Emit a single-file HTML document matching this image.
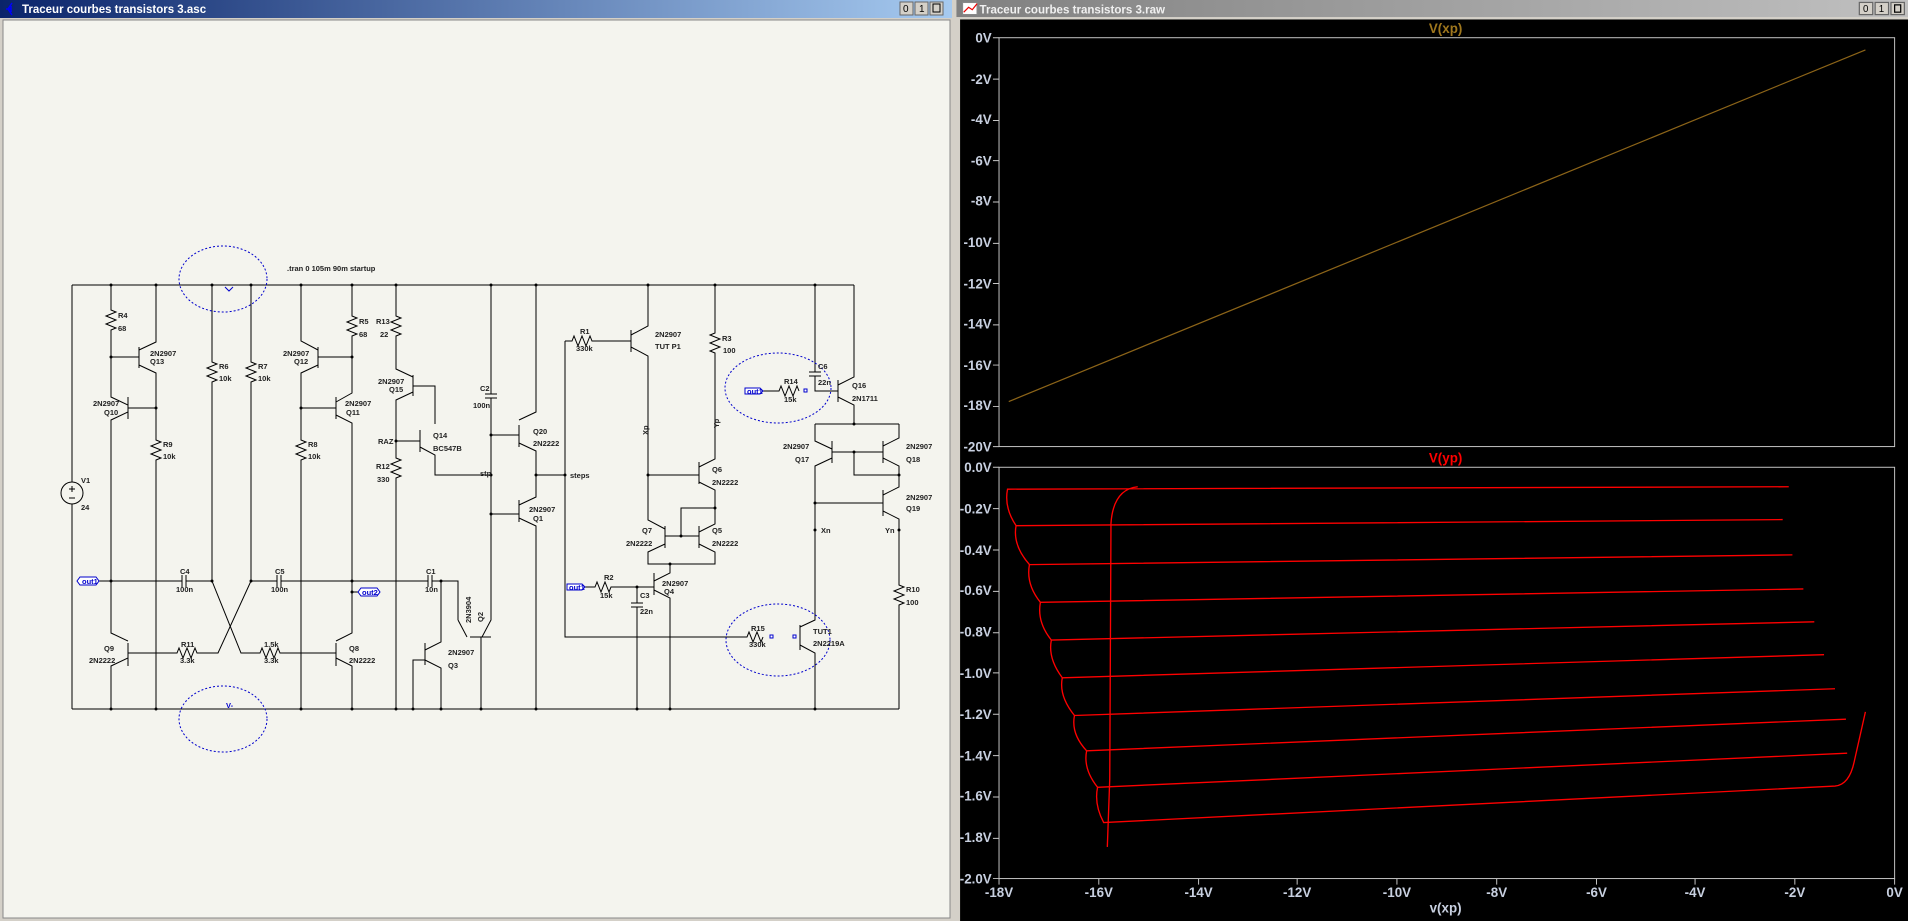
<!DOCTYPE html>
<html><head><meta charset="utf-8"><style>
html,body{margin:0;padding:0;background:#d4d0c8;width:1908px;height:921px;overflow:hidden}
svg{display:block}
.t{font-family:"Liberation Sans",sans-serif;font-size:7.5px;font-weight:bold;fill:#222}
.ax{font-family:"Liberation Sans",sans-serif;font-size:11px;font-weight:bold;fill:#c8d0e0}
</style></head><body>
<svg width="1908" height="921" viewBox="0 0 1908 921" xmlns="http://www.w3.org/2000/svg">
<defs><linearGradient id="g1" x1="0" x2="1"><stop offset="0" stop-color="#0a246a"/><stop offset="1" stop-color="#a6caf0"/></linearGradient>
<linearGradient id="g2" x1="0" x2="1"><stop offset="0" stop-color="#808080"/><stop offset="1" stop-color="#c0c0c0"/></linearGradient></defs>
<rect width="1908" height="921" fill="#d4d0c8"/>
<rect x="0" y="0" width="952" height="18" fill="url(#g1)"/>
<text x="22" y="13" font-family="Liberation Sans" font-size="11.5" font-weight="bold" fill="#fff">Traceur courbes transistors 3.asc</text>
<path d="M12 3 L8 9 L12 15 M6 9 H11 M11 6 V12" stroke="#00f" stroke-width="1.5" fill="none"/>
<g font-family="Liberation Sans" font-size="10" fill="#000">
<rect x="900" y="2" width="13" height="13" fill="#d4d0c8" stroke="#666"/><text x="903" y="12">0</text>
<rect x="915" y="2" width="13" height="13" fill="#d4d0c8" stroke="#666"/><text x="919" y="12">1</text>
<rect x="930" y="2" width="13" height="13" fill="#d4d0c8" stroke="#666"/><rect x="933" y="4" width="7" height="8" fill="none" stroke="#000"/>
</g>
<rect x="3" y="20" width="947" height="898" fill="#f4f4ee" stroke="#888"/>

<g stroke="#000" stroke-width="1" fill="none">
<path d="M72 285 H854 M72 709 H899"/>
<path d="M72 285 V482 M72 504 V709"/>
<circle cx="72" cy="493" r="11"/>
<path d="M69 489 h6 M72 486 v6 M69 498 h6"/>
<path d="M111 285 V310 l5 2 -10 4 10 4 -10 4 10 4 -5 2 V397 l17 8 M128 397 V419 M128 412 l-17 8 V633 l17 8 M128 643 V666 M128 658 l-17 8 V709"/>
<path d="M111 357 H139 M139 347 V368 M139 350 l17 -8 V285 M139 365 l17 8 V440 l5 2 -10 4 10 4 -10 4 10 4 -5 2 V709 M128 408 H156"/>
<path d="M212 285 V362 l5 2 -10 4 10 4 -10 4 10 4 -5 2 V581 L241 653 H260 l2 -5 4 10 4 -10 4 10 4 -10 2 5 H336"/>
<path d="M251 285 V362 l5 2 -10 4 10 4 -10 4 10 4 -5 2 V581 L218 653 H197 l-2 -5 -4 10 -4 -10 -4 10 -4 -10 -2 5 H128"/>
<path d="M301 285 V341 l17 9 M318 347 V368 M318 365 l-17 8 V440 l5 2 -10 4 10 4 -10 4 10 4 -5 2 V709 M301 408 H336 M318 357 H352"/>
<path d="M352 285 V316 l5 2 -10 4 10 4 -10 4 10 4 -5 2 V393 l-16 9 M336 397 V419 M336 415 l16 8 V633 l-16 8 M336 643 V666 M336 658 l16 8 V709"/>
<path d="M99 581 H182 M186 581 H212 M251 581 H277 M281 581 H428 M432 581 H458 V620"/>
<path d="M182 575 V587 M186 575 V587 M277 575 V587 M281 575 V587 M428 575 V587 M432 575 V587"/>
<path d="M352 592 H360"/>
<path d="M396 285 V316 l5 2 -10 4 10 4 -10 4 10 4 -5 2 V369 l17 8 M413 375 V396 M413 386 H435 V424 M413 392 l-17 8 V458 l5 2 -10 4 10 4 -10 4 10 4 -5 2 V709 M396 441 H420 M420 430 V452 M420 447 l15 8 V475 H491"/>
<path d="M491 285 V394 M491 398 V620 L482 637 M485 394 h12 M485 398 h12 M491 435 H519 M491 514 H519"/>
<path d="M519 425 V447 M519 420 l17 -8 V285 M519 443 l17 8 V475 H565 M519 500 V522 M519 505 l17 -8 V475 M519 518 l17 8 V709"/>
<path d="M458 620 l9 17 M470 637 H491 M481 637 V709 M425 643 V665 M425 650 l16 -8 V581 M425 660 l16 8 V709 M413 709 V660 H425"/>
<path d="M565 341 V637 H747 l2 -5 4 10 4 -10 4 10 2 -5"/>
<path d="M565 341 H572 l2 -5 4 10 4 -10 4 10 4 -10 2 5 H631 M631 330 V352 M631 335 l17 -9 V285 M631 347 l17 9 V520 l17 9 M665 526 V548 M665 544 l-17 8 V564 H715 V552 l-16 -8 M699 526 V548 M665 536 H699 M681 536 V508 H715 V490 l-16 -8 M699 462 V484 M699 467 l16 -8 V353 l-5 -2 10 -4 -10 -4 10 -4 -10 -4 5 -2 V285 M648 475 H699 M699 532 l16 -8 V508"/>
<path d="M670 564 V573 l-16 8 M654 573 V595 M654 590 l16 8 V709 M585 587 H595 l2 -5 4 10 4 -10 4 10 2 -5 H654 M637 587 V603 M631 603 h12 M631 607 h12 M637 607 V709"/>
<path d="M815 285 V372 M809 372 h12 M809 376 h12 M815 376 V391 H838 M838 380 V402 M838 385 l16 -8 V285 M838 397 l16 8 V424 M815 424 H899 M815 424 V441 l17 8 M832 441 V463 M832 458 l-17 8 V620 l-15 7 M800 625 V650 M800 645 l15 8 V709 M832 452 H883 M854 452 V475 H899 M883 441 V463 M883 446 l16 -8 V424 M883 458 l16 8 V475 M815 503 H883 M883 490 V516 M883 495 l16 -8 V475 M883 511 l16 8 V585 l5 2 -10 4 10 4 -10 4 10 4 -5 2 V709"/>
<path d="M763 391 H779 l2 -5 4 10 4 -10 4 10 4 -10 2 5"/>
</g>
<g stroke="#00c" stroke-width="1" stroke-dasharray="2,2" fill="none">
<ellipse cx="223" cy="279" rx="44" ry="33"/><ellipse cx="223" cy="719" rx="44" ry="33"/>
<ellipse cx="778" cy="388" rx="53" ry="35"/><ellipse cx="778" cy="640" rx="52" ry="36"/>
</g>
<path d="M225 287 l4 4 4 -4" stroke="#00c" fill="none"/>
<g fill="#000">
<circle cx="111" cy="285" r="1.5"/><circle cx="156" cy="285" r="1.5"/><circle cx="212" cy="285" r="1.5"/><circle cx="251" cy="285" r="1.5"/><circle cx="301" cy="285" r="1.5"/><circle cx="352" cy="285" r="1.5"/><circle cx="396" cy="285" r="1.5"/><circle cx="491" cy="285" r="1.5"/><circle cx="536" cy="285" r="1.5"/><circle cx="648" cy="285" r="1.5"/><circle cx="715" cy="285" r="1.5"/><circle cx="815" cy="285" r="1.5"/>
<circle cx="111" cy="709" r="1.5"/><circle cx="156" cy="709" r="1.5"/><circle cx="301" cy="709" r="1.5"/><circle cx="352" cy="709" r="1.5"/><circle cx="396" cy="709" r="1.5"/><circle cx="413" cy="709" r="1.5"/><circle cx="441" cy="709" r="1.5"/><circle cx="481" cy="709" r="1.5"/><circle cx="536" cy="709" r="1.5"/><circle cx="637" cy="709" r="1.5"/><circle cx="670" cy="709" r="1.5"/><circle cx="815" cy="709" r="1.5"/>
<circle cx="111" cy="581" r="1.5"/><circle cx="212" cy="581" r="1.5"/><circle cx="251" cy="581" r="1.5"/><circle cx="352" cy="581" r="1.5"/><circle cx="441" cy="581" r="1.5"/><circle cx="352" cy="592" r="1.5"/>
<circle cx="111" cy="357" r="1.5"/><circle cx="352" cy="357" r="1.5"/><circle cx="156" cy="408" r="1.5"/><circle cx="301" cy="408" r="1.5"/><circle cx="396" cy="441" r="1.5"/><circle cx="491" cy="435" r="1.5"/><circle cx="491" cy="475" r="1.5"/><circle cx="491" cy="514" r="1.5"/><circle cx="536" cy="475" r="1.5"/><circle cx="565" cy="475" r="1.5"/><circle cx="648" cy="475" r="1.5"/><circle cx="715" cy="508" r="1.5"/><circle cx="681" cy="536" r="1.5"/><circle cx="670" cy="564" r="1.5"/><circle cx="637" cy="587" r="1.5"/><circle cx="854" cy="424" r="1.5"/><circle cx="854" cy="452" r="1.5"/><circle cx="899" cy="475" r="1.5"/><circle cx="815" cy="503" r="1.5"/><circle cx="815" cy="530" r="1.5"/><circle cx="899" cy="530" r="1.5"/>
</g>
<g fill="#fff" stroke="#00c"><rect x="804" y="389" width="3" height="3"/><rect x="770" y="635" width="3" height="3"/><rect x="793" y="635" width="3" height="3"/></g>
<g font-family="Liberation Sans" font-size="7.5" font-weight="bold">
<path d="M77 581 l3 -4 h16 l3 4 -3 4 h-16 z" fill="#fff" stroke="#00c"/><text x="82" y="584" fill="#00c">out1</text>
<path d="M358 592 l3 -4 h16 l3 4 -3 4 h-16 z" fill="#fff" stroke="#00c"/><text x="362" y="595" fill="#00c">out2</text>
<path d="M567 584 h15 l3 3 -3 3 h-15 z" fill="#fff" stroke="#00c"/><text x="569" y="590" fill="#00c">out1</text>
<path d="M745 388 h15 l3 3 -3 3 h-15 z" fill="#fff" stroke="#00c"/><text x="747" y="394" fill="#00c">out1</text>
<text x="226" y="708" fill="#00c">V-</text>
</g>
<g class="t">
<text x="287" y="271">.tran 0 105m 90m startup</text>
<text x="81" y="483">V1</text><text x="81" y="510">24</text>
<text x="118" y="318">R4</text><text x="118" y="331">68</text>
<text x="150" y="356">2N2907</text><text x="150" y="364">Q13</text>
<text x="93" y="406">2N2907</text><text x="104" y="415">Q10</text>
<text x="163" y="447">R9</text><text x="163" y="459">10k</text>
<text x="219" y="369">R6</text><text x="219" y="381">10k</text>
<text x="258" y="369">R7</text><text x="258" y="381">10k</text>
<text x="283" y="356">2N2907</text><text x="294" y="364">Q12</text>
<text x="345" y="406">2N2907</text><text x="346" y="415">Q11</text>
<text x="308" y="447">R8</text><text x="308" y="459">10k</text>
<text x="359" y="324">R5</text><text x="359" y="337">68</text>
<text x="376" y="324">R13</text><text x="380" y="337">22</text>
<text x="378" y="384">2N2907</text><text x="389" y="392">Q15</text>
<text x="378" y="444">RAZ</text><text x="433" y="438">Q14</text><text x="433" y="451">BC547B</text>
<text x="376" y="469">R12</text><text x="377" y="482">330</text>
<text x="480" y="476">stp</text>
<text x="480" y="391">C2</text><text x="473" y="408">100n</text>
<text x="180" y="574">C4</text><text x="176" y="592">100n</text>
<text x="275" y="574">C5</text><text x="271" y="592">100n</text>
<text x="426" y="574">C1</text><text x="425" y="592">10n</text>
<text x="104" y="651">Q9</text><text x="89" y="663">2N2222</text>
<text x="181" y="647">R11</text><text x="180" y="663">3.3k</text>
<text x="264" y="647">1.5k</text><text x="264" y="663">3.3k</text>
<text x="349" y="651">Q8</text><text x="349" y="663">2N2222</text>
<text x="448" y="655">2N2907</text><text x="448" y="668">Q3</text>
<text transform="translate(471,623) rotate(-90)">2N3904</text><text transform="translate(483,622) rotate(-90)">Q2</text>
<text x="533" y="434">Q20</text><text x="533" y="446">2N2222</text>
<text x="529" y="512">2N2907</text><text x="533" y="521">Q1</text>
<text x="570" y="478">steps</text>
<text x="580" y="334">R1</text><text x="576" y="351">330k</text>
<text x="655" y="337">2N2907</text><text x="655" y="349">TUT  P1</text>
<text transform="translate(648,435) rotate(-90)">Xp</text><text transform="translate(719,428) rotate(-90)">Yp</text>
<text x="722" y="341">R3</text><text x="723" y="353">100</text>
<text x="712" y="472">Q6</text><text x="712" y="485">2N2222</text>
<text x="642" y="533">Q7</text><text x="626" y="546">2N2222</text>
<text x="712" y="533">Q5</text><text x="712" y="546">2N2222</text>
<text x="604" y="580">R2</text><text x="600" y="598">15k</text>
<text x="662" y="586">2N2907</text><text x="664" y="594">Q4</text>
<text x="640" y="598">C3</text><text x="640" y="614">22n</text>
<text x="784" y="384">R14</text><text x="784" y="402">15k</text>
<text x="818" y="369">C6</text><text x="818" y="385">22n</text>
<text x="852" y="388">Q16</text><text x="852" y="401">2N1711</text>
<text x="783" y="449">2N2907</text><text x="795" y="462">Q17</text>
<text x="906" y="449">2N2907</text><text x="906" y="462">Q18</text>
<text x="906" y="500">2N2907</text><text x="906" y="511">Q19</text>
<text x="821" y="533">Xn</text><text x="885" y="533">Yn</text>
<text x="906" y="592">R10</text><text x="906" y="605">100</text>
<text x="751" y="631">R15</text><text x="749" y="647">330k</text>
<text x="813" y="634">TUT1</text><text x="813" y="646">2N2219A</text>
</g>

<g transform="scale(1.21684)">
<rect x="786" y="0" width="782" height="14" fill="url(#g2)"/>
<rect x="791" y="2" width="12" height="10" fill="#fff" stroke="#888"/><path d="M792 10 L796 6 L799 8 L803 3" stroke="#e00" fill="none"/>
<text x="805" y="11" font-family="Liberation Sans" font-size="9.5" font-weight="bold" fill="#f0f0f0">Traceur courbes transistors 3.raw</text>
<g font-family="Liberation Sans" font-size="8" fill="#000">
<rect x="1528" y="2" width="11" height="10" fill="#d4d0c8" stroke="#666"/><text x="1531" y="10">0</text>
<rect x="1541" y="2" width="11" height="10" fill="#d4d0c8" stroke="#666"/><text x="1544" y="10">1</text>
<rect x="1554" y="2" width="11" height="10" fill="#d4d0c8" stroke="#666"/><rect x="1557" y="4" width="5" height="6" fill="none" stroke="#000"/>
</g>
<rect x="789" y="16" width="779" height="741" fill="#000"/>
<g stroke="#c8c8c8" stroke-width="0.8" fill="none">
<rect x="821" y="31" width="736" height="336"/>
<rect x="821" y="384" width="736" height="338"/>
</g>
<text x="1188" y="27" class="ax" style="fill:#a0781e" text-anchor="middle">V(xp)</text>
<text x="1188" y="380" class="ax" style="fill:#f00" text-anchor="middle">V(yp)</text>
<text x="1188" y="750" class="ax" text-anchor="middle">v(xp)</text>
<g class="ax" text-anchor="end">
<text x="815" y="35">0V</text><text x="815" y="69">-2V</text><text x="815" y="102">-4V</text><text x="815" y="136">-6V</text><text x="815" y="169">-8V</text><text x="815" y="203">-10V</text><text x="815" y="237">-12V</text><text x="815" y="270">-14V</text><text x="815" y="304">-16V</text><text x="815" y="337">-18V</text><text x="815" y="371">-20V</text>
<text x="815" y="388">0.0V</text><text x="815" y="422">-0.2V</text><text x="815" y="456">-0.4V</text><text x="815" y="489">-0.6V</text><text x="815" y="523">-0.8V</text><text x="815" y="557">-1.0V</text><text x="815" y="591">-1.2V</text><text x="815" y="625">-1.4V</text><text x="815" y="658">-1.6V</text><text x="815" y="692">-1.8V</text><text x="815" y="726">-2.0V</text>
</g>
<g class="ax" text-anchor="middle">
<text x="821" y="737">-18V</text><text x="903" y="737">-16V</text><text x="985" y="737">-14V</text><text x="1066" y="737">-12V</text><text x="1148" y="737">-10V</text><text x="1230" y="737">-8V</text><text x="1312" y="737">-6V</text><text x="1393" y="737">-4V</text><text x="1475" y="737">-2V</text><text x="1557" y="737">0V</text>
</g>
<g stroke="#c8c8c8" stroke-width="0.8">
<path d="M816 31h5M816 65h5M816 99h5M816 132h5M816 166h5M816 200h5M816 233h5M816 267h5M816 300h5M816 334h5M816 367h5"/>
<path d="M816 384h5M816 418h5M816 452h5M816 486h5M816 520h5M816 553h5M816 587h5M816 621h5M816 655h5M816 689h5M816 722h5"/>
<path d="M821 722v5M903 722v5M985 722v5M1066 722v5M1148 722v5M1230 722v5M1312 722v5M1393 722v5M1475 722v5M1557 722v5"/>
</g>
<line x1="829" y1="330" x2="1533" y2="41" stroke="#8c6418" stroke-width="1"/>
<g stroke="#f00" stroke-width="1.1" fill="none">
<path d="M1470 400 L828 402 Q825 417 835 432 L1465 427"/>
<path d="M835 432 Q832 448 846 464 L1473 456"/>
<path d="M846 464 Q843 480 855 495 L1482 484"/>
<path d="M855 495 Q852 511 864 526 L1491 511"/>
<path d="M864 526 Q861 541 873 557 L1499 538"/>
<path d="M873 557 Q870 572 883 588 L1508 566"/>
<path d="M883 588 Q880 603 893 617 L1517 591"/>
<path d="M893 617 Q890 632 902 647 L1518 619"/>
<path d="M902 647 Q899 661 907 676 L1508 646 Q1520 645 1524 625 L1533 585"/>
<path d="M910 696 L912 640 L913 430 Q915 402 935 400"/>
</g>
</g>
</svg>
</body></html>
